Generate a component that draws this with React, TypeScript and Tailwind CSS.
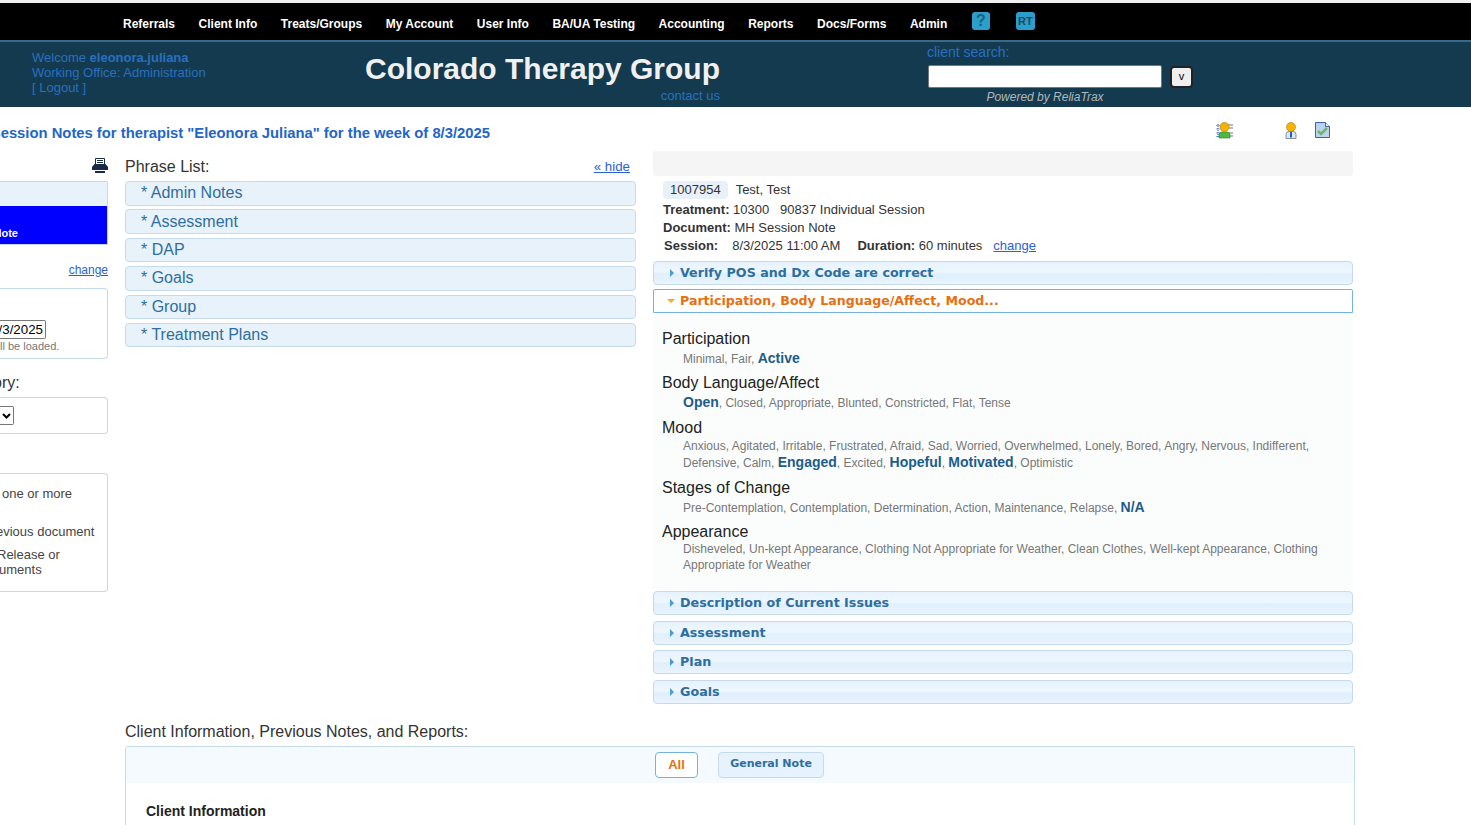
const navLinks = ['Referrals', 'Client Info', 'Treats/Groups', 'My Account', 'User Info', 'BA/UA Testing', 'Accounting', 'Reports', 'Docs/Forms', 'Admin']
const phrases = ['Admin Notes', 'Assessment', 'DAP', 'Goals', 'Group', 'Treatment Plans']
const closedBottom = ['Description of Current Issues', 'Assessment', 'Plan', 'Goals']

function Opt({ children }: { children: React.ReactNode }) {
  return <b className="text-[14px] text-[#1d5c8a]">{children}</b>
}

function AccordionHead({ title, className = '' }: { title: string; className?: string }) {
  return (
    <div className={`flex h-[24px] items-center rounded-[4px] border border-[#c5dbec] bg-[linear-gradient(#e6f2fd_0%,#eef7ff_45%,#dfeffc_55%,#e9f4fe_100%)] pl-[16px] ${className}`}>
      <span className="mr-[6px] h-0 w-0 border-y-[4px] border-l-[4px] border-y-transparent border-l-[#4a9bd9]" />
      <span className="font-['DejaVu_Sans',sans-serif] text-[12.700px] font-bold text-[#2e6e9e]">{title}</span>
    </div>
  )
}

function PrinterIcon() {
  return (
    <svg width="16" height="15" viewBox="0 0 16 15">
      <path d="M3.500 0.500h9v6h-9z" fill="#fff" stroke="#1a2b4a" />
      <path d="M5 2.500h6M5 4.500h6" stroke="#1a2b4a" />
      <path d="M2.500 6h11l2.500 3v3H0V9z" fill="#1a2b4a" />
      <path d="M3 13h10v2H3z" fill="#1a2b4a" />
    </svg>
  )
}

function UserListIcon() {
  return (
    <svg width="17" height="17" viewBox="0 0 17 17">
      <path d="M2 2v13M0.500 3.500h3M0.500 7h3M0.500 11h3M0.500 14.500h3" stroke="#1c50c8" strokeWidth="1" strokeDasharray="1 1" />
      <path d="M12 3h5M13 6h4M13 11h4M13 14h4" stroke="#777" />
      <path d="M3 16v-3q0-3 3-3h5q3 0 3 3v3z" fill="#4dbb3f" stroke="#2b7a24" strokeWidth="0.6" />
      <circle cx="8.500" cy="5" r="4.500" fill="#f5b400" stroke="#b87800" strokeWidth="0.6" />
    </svg>
  )
}

function UserIcon() {
  return (
    <svg width="12" height="17" viewBox="0 0 12 17">
      <path d="M1 16.500v-4q0-3 3-3h4q3 0 3 3v4z" fill="#dfe6ee" stroke="#667" strokeWidth="0.7" />
      <path d="M5 9.500h2v6h-2z" fill="#1b66c9" />
      <circle cx="6" cy="5" r="4.500" fill="#f5b400" stroke="#b87800" strokeWidth="0.6" />
    </svg>
  )
}

function DocCheckIcon() {
  return (
    <svg width="15" height="16" viewBox="0 0 15 16">
      <path d="M0.500 0.500h10l4 4v11h-14z" fill="#bcd3f0" stroke="#3f63a8" />
      <path d="M10.500 0.500v4h4" fill="#eef4fc" stroke="#3f63a8" />
      <path d="M3 9l3 3 6-6" fill="none" stroke="#6fb56a" strokeWidth="2.500" />
    </svg>
  )
}

export default function App() {
  return (
    <div className="h-[825px] w-[1471px] overflow-hidden bg-white font-['Liberation_Sans',sans-serif] text-[#333]">
      <div className="h-[3px] bg-[#f0f0f0]" />

      {/* Top nav */}
      <nav className="flex h-[37px] items-center gap-[23.550px] bg-black pl-[123px] text-[12px] font-bold text-white">
        {navLinks.map((link) => (
          <a key={link} className="mt-[5px]">{link}</a>
        ))}
        <div className="ml-[1px] flex items-center gap-[26px]">
          <span className="mb-[1px] flex h-[18px] w-[18px] items-center justify-center rounded-[3px] bg-[#2b9fcb] text-[16px] text-[#1e5f7d]">?</span>
          <span className="mb-[1px] flex h-[18px] w-[19px] items-center justify-center rounded-[3px] bg-[#2b9fcb] text-[11px] text-[#17475e]">RT</span>
        </div>
      </nav>

      {/* Header band */}
      <header className="flex h-[67px] border-t-[2px] border-[#3a6a85] bg-[#133a4e]">
        <div className="w-[365px] pl-[32px] pt-[8px] text-[13px] leading-[15px] text-[#2a70c0]">
          <div>Welcome <b>eleonora.juliana</b></div>
          <div>Working Office: Administration</div>
          <div>[ Logout ]</div>
        </div>
        <div className="w-[355px] whitespace-nowrap text-right">
          <div className="pt-[7px] text-[30px] font-bold leading-[39px] text-[#f0f0f0]">Colorado Therapy Group</div>
          <div className="text-[13px] leading-[16px] text-[#2a70c0]">contact us</div>
        </div>
        <div className="ml-[207px] w-[300px] pt-[2px]">
          <div className="text-[14px] leading-[17px] text-[#2a70c0]">client search:</div>
          <div className="mt-[4px] flex items-center gap-[8px] pl-[1px]">
            <div className="h-[23px] w-[234px] rounded-[2px] border border-[#777] bg-white" />
            <div className="flex h-[22px] w-[23px] items-center justify-center rounded-[4px] border-2 border-[#222] bg-[#efefef] text-[11px] text-black">v</div>
          </div>
          <div className="w-[236px] pt-[2px] text-center text-[12px] italic leading-[14px] text-[#b0b8bd]">Powered by ReliaTrax</div>
        </div>
      </header>

      {/* Title row */}
      <div className="flex h-[44px] items-center">
        <div className="flex w-[490px] shrink-0 justify-end overflow-hidden whitespace-nowrap pt-[8px] text-[14.800px] font-bold text-[#1f66c9]">
          Session Notes for therapist "Eleonora Juliana" for the week of 8/3/2025
        </div>
        <div className="ml-[726px] flex items-center pt-[2px]">
          <UserListIcon />
          <span className="ml-[52px]"><UserIcon /></span>
          <span className="ml-[18px]"><DocCheckIcon /></span>
        </div>
      </div>

      <div className="flex">
        {/* Left column, runs off the page edge */}
        <aside className="w-[108px] shrink-0 overflow-hidden">
          <div className="flex h-[30px] items-start justify-end pt-[7px]"><PrinterIcon /></div>
          <div className="h-[64px] overflow-hidden rounded-tr-[2px] border-y border-r border-[#c5d9ea] bg-[#e8f2fb]">
            <div className="mt-[24px] flex h-[38px] items-end justify-end bg-[#0000ff] pb-[3px] pr-[89px] text-[11px] font-bold text-white">
              <span className="whitespace-nowrap">Note</span>
            </div>
          </div>
          <div className="mt-[18px] text-right text-[12px] leading-[14px] text-[#2b5fd9] underline">change</div>
          <div className="mt-[11px] flex h-[71px] flex-col items-start rounded-r-[4px] border-y border-r border-[#c5d9ea] pt-[31px]">
            <div className="flex h-[19px] w-[46px] items-center justify-end rounded-r-[2px] border-y border-r border-[#767676] pr-[2px] text-[13.330px] text-black">/3/2025</div>
            <div className="whitespace-nowrap text-[11px] leading-[14px] text-[#777]">ll be loaded.</div>
          </div>
          <div className="ml-[-7px] mt-[15px] h-[18px] text-[16px] leading-[18px]">ory:</div>
          <div className="mt-[5px] flex h-[37px] items-center rounded-r-[4px] border-y border-r border-[#c5d9ea]">
            <div className="flex h-[19px] w-[14px] items-center justify-center rounded-r-[2px] border-y border-r border-[#767676]">
              <svg width="9" height="6" viewBox="0 0 9 6"><path d="M1 1l3.500 3.500L8 1" fill="none" stroke="#000" strokeWidth="2" /></svg>
            </div>
          </div>
          <div className="mt-[39px] h-[119px] rounded-r-[4px] border-y border-r border-[#c5d9ea] pt-[12px] text-[13px] leading-[15px] whitespace-nowrap text-[#444]">
            <div className="ml-[2px]">one or more</div>
            <div className="ml-[-4px] mt-[23px]">evious document</div>
            <div className="ml-[-3px] mt-[8px]">Release or</div>
            <div className="ml-[-1px]">uments</div>
          </div>
        </aside>

        {/* Phrase list */}
        <section className="ml-[17px] w-[511px] shrink-0">
          <div className="flex h-[30px] items-center justify-between pr-[6px] pt-[1px]">
            <span className="text-[16px] text-[#333]">Phrase List:</span>
            <a className="text-[13.300px] text-[#2b5fd9] underline">« hide</a>
          </div>
          <div className="flex flex-col gap-[3.900px]">
            {phrases.map((p) => (
              <div key={p} className="flex h-[24.500px] items-center rounded-[4px] border border-[#c5dbec] bg-[#e8f2fb] pl-[15px] text-[16px] text-[#2e6e9e]">* {p}</div>
            ))}
          </div>
        </section>

        {/* Note panel */}
        <section className="ml-[17px] w-[700px] shrink-0">
          <div className="h-[25px] rounded-[3px] bg-[#f5f5f5]" />
          <div className="mt-[4px] pl-[10px] text-[13px] leading-[18px]">
            <div className="flex h-[19px] items-center">
              <span className="rounded-[4px] bg-[#e8f0fa] px-[7px]">1007954</span>
              <span className="ml-[8px]">Test, Test</span>
            </div>
            <div className="mt-[2px]"><b>Treatment:</b> 10300&nbsp;&nbsp; 90837 Individual Session</div>
            <div><b>Document:</b> MH Session Note</div>
            <div className="pl-[1px]">
              <b>Session:</b><span className="ml-[14px]">8/3/2025 11:00 AM</span>
              <b className="ml-[17px]">Duration:</b> 60 minutes
              <a className="ml-[11px] text-[#2b5fd9] underline">change</a>
            </div>
          </div>

          <AccordionHead title="Verify POS and Dx Code are correct" className="mt-[6px]" />
          <div className="mt-[4px] flex h-[24px] items-center rounded-t-[2px] border border-[#74b2e2] bg-white pl-[13px]">
            <span className="mr-[5px] h-0 w-0 border-x-[4px] border-t-[4px] border-x-transparent border-t-[#f6a828]" />
            <span className="font-['DejaVu_Sans',sans-serif] text-[12.600px] font-bold text-[#e6700f]">Participation, Body Language/Affect, Mood...</span>
          </div>
          <div className="h-[277px] bg-[#fbfdfd] pl-[9px] pr-[30px] pt-[17px] text-[12px] leading-[16px] text-[#777]">
            <div className="text-[16px] leading-[18px] text-[#222]">Participation</div>
            <div className="mt-[2px] pl-[21px]">Minimal, Fair, <Opt>Active</Opt></div>
            <div className="mt-[7px] text-[16px] leading-[18px] text-[#222]">Body Language/Affect</div>
            <div className="mt-[2px] pl-[21px]"><Opt>Open</Opt>, Closed, Appropriate, Blunted, Constricted, Flat, Tense</div>
            <div className="mt-[8px] text-[16px] leading-[18px] text-[#222]">Mood</div>
            <div className="mt-[1px] pl-[21px]">
              Anxious, Agitated, Irritable, Frustrated, Afraid, Sad, Worried, Overwhelmed, Lonely, Bored, Angry, Nervous, Indifferent,<br />
              Defensive, Calm, <Opt>Engaged</Opt>, Excited, <Opt>Hopeful</Opt>, <Opt>Motivated</Opt>, Optimistic
            </div>
            <div className="mt-[8px] text-[16px] leading-[18px] text-[#222]">Stages of Change</div>
            <div className="mt-[2px] pl-[21px]">Pre-Contemplation, Contemplation, Determination, Action, Maintenance, Relapse, <Opt>N/A</Opt></div>
            <div className="mt-[7px] text-[16px] leading-[18px] text-[#222]">Appearance</div>
            <div className="pl-[21px]">Disheveled, Un-kept Appearance, Clothing Not Appropriate for Weather, Clean Clothes, Well-kept Appearance, Clothing Appropriate for Weather</div>
          </div>
          <div className="mt-[1px] flex flex-col gap-[5.500px]">
            {closedBottom.map((t) => (
              <AccordionHead key={t} title={t} />
            ))}
          </div>
        </section>
      </div>

      {/* Client info */}
      <div className="ml-[125px] mt-[19px] w-[1230px]">
        <div className="text-[16px] leading-[18px]">Client Information, Previous Notes, and Reports:</div>
        <div className="mt-[5px] h-[90px] rounded-t-[3px] border border-b-0 border-[#c5dbec]">
          <div className="flex h-[36px] items-center gap-[20px] bg-[#f5faff] pl-[529px] text-[13px] font-bold">
            <span className="flex h-[26px] w-[43px] items-center justify-center rounded-[4px] border border-[#74b2e2] bg-white text-[#e6700f]">All</span>
            <span className="flex h-[26px] w-[106px] items-center justify-center rounded-[4px] border border-[#c5dbec] bg-[#e6f2fd] font-['DejaVu_Sans',sans-serif] text-[11px] text-[#2e6e9e]">General Note</span>
          </div>
          <div className="pl-[20px] pt-[20px] text-[14px] font-bold leading-[16px] text-[#222]">Client Information</div>
        </div>
      </div>
    </div>
  )
}
